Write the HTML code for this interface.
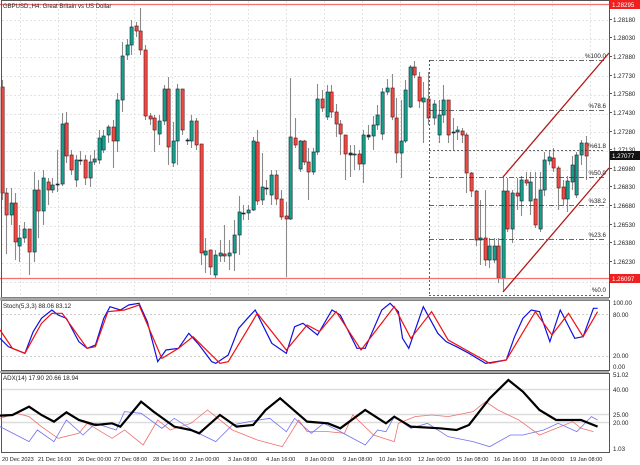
<!DOCTYPE html>
<html><head><meta charset="utf-8"><style>
html,body{margin:0;padding:0;background:#fff;width:640px;height:465px;overflow:hidden}
svg{display:block;font-family:"Liberation Sans",sans-serif}
text{font-size:6.2px;fill:#222}
.d text{font-size:5.6px}
polyline{vector-effect:non-scaling-stroke}
</style></head><body>
<svg id="s" width="640" height="465" viewBox="0 0 640 465">
<g id="grid" stroke="#e4e4e4" stroke-width="1" stroke-dasharray="2,2"></g>
<g id="c"></g>
<line x1="0" y1="4.5" x2="609" y2="4.5" stroke="#f27070" stroke-width="1.2"/>
<line x1="0" y1="278.5" x2="609" y2="278.5" stroke="#f27070" stroke-width="1.2"/>
<g stroke="#333" stroke-width="0.8" fill="none">
<line x1="429.5" y1="60" x2="429.5" y2="295" stroke-dasharray="2,2"/>
<line x1="429" y1="60.5" x2="605" y2="60.5" stroke-dasharray="5,2,1,2"/>
<line x1="429" y1="110.5" x2="605" y2="110.5" stroke-dasharray="5,2,1,2"/>
<line x1="429" y1="150.5" x2="605" y2="150.5" stroke-dasharray="2,2"/>
<line x1="429" y1="177.5" x2="605" y2="177.5" stroke-dasharray="5,2,1,2"/>
<line x1="429" y1="205.5" x2="605" y2="205.5" stroke-dasharray="5,2,1,2"/>
<line x1="429" y1="239.5" x2="605" y2="239.5" stroke-dasharray="5,2,1,2"/>
<line x1="429" y1="295.5" x2="605" y2="295.5" stroke-dasharray="2,2"/>
</g>
<g text-anchor="end">
<text x="606" y="58">%100.0</text><text x="606" y="108">%78.6</text><text x="606" y="148">%61.8</text>
<text x="606" y="175">%50.0</text><text x="606" y="203">%38.2</text><text x="606" y="237">%23.6</text><text x="606" y="292">%0.0</text>
</g>
<line x1="503" y1="177" x2="609" y2="53" stroke="#b01818" stroke-width="1.3"/>
<line x1="503" y1="292" x2="609" y2="168" stroke="#b01818" stroke-width="1.3"/>
<g fill="none" stroke="#555" stroke-width="1">
<rect x="1.5" y="0.5" width="608" height="297"/>
<rect x="1.5" y="300.5" width="608" height="70"/>
<rect x="1.5" y="373.5" width="608" height="79"/>
</g>
<rect x="0" y="297.5" width="609" height="3" fill="#aaa"/>
<rect x="0" y="371" width="609" height="2" fill="#aaa"/>
<text x="3" y="8" style="font-size:6px">GBPUSD.,H4: Great Britain vs US Dollar</text>
<g id="ax"></g>
<rect x="610" y="0" width="30" height="9" fill="#f02020"/><text x="612" y="7" style="fill:#fff">1.28295</text>
<rect x="610" y="151" width="30" height="9" fill="#111"/><text x="612" y="158" style="fill:#fff">1.27077</text>
<rect x="610" y="274" width="30" height="9" fill="#f02020"/><text x="612" y="281" style="fill:#fff">1.26097</text>
<line x1="2" y1="314.5" x2="609" y2="314.5" stroke="#ccc" stroke-dasharray="2,2"/>
<line x1="2" y1="356.5" x2="609" y2="356.5" stroke="#ccc" stroke-dasharray="2,2"/>
<text x="3" y="308">Stoch(5,3,3) 88.06 83.12</text>
<g transform="translate(0,295) scale(0.415,0.3333)" fill="none">
<polyline stroke="#1010e0" stroke-width="1.2" points="0,130 20,155 60,175 80,110 100,70 125,45 140,60 160,70 190,140 210,160 230,150 250,70 265,35 290,45 310,30 335,25 355,80 380,200 400,165 430,160 455,115 480,150 510,200 520,205 550,180 575,100 600,65 615,45 655,145 690,175 710,95 730,85 765,120 800,45 820,60 860,160 880,160 920,45 940,25 960,50 970,130 985,160 1020,35 1055,115 1075,140 1100,155 1130,175 1170,205 1220,195 1240,125 1260,70 1280,45 1300,50 1325,140 1350,45 1385,130 1405,125 1430,40 1440,40"/>
<polyline stroke="#f01010" stroke-width="1.2" points="0,105 30,160 60,175 100,85 125,55 150,55 210,160 230,155 260,50 300,45 335,30 390,190 430,160 465,125 530,205 550,200 620,55 690,165 740,90 770,110 810,50 870,165 950,35 990,130 1040,50 1080,135 1130,170 1180,205 1220,195 1290,50 1330,120 1370,55 1405,125 1440,50"/>
</g>
<line x1="2" y1="389.5" x2="609" y2="389.5" stroke="#ddd" stroke-width="1.5"/>
<line x1="2" y1="414.5" x2="609" y2="414.5" stroke="#ddd" stroke-width="1.5"/>
<line x1="2" y1="422.5" x2="609" y2="422.5" stroke="#ddd" stroke-width="1.5"/>
<text x="3" y="380">ADX(14) 17.90 20.66 18.94</text>
<g transform="translate(0,295) scale(0.415,0.3333)" fill="none">
<polyline stroke="#f07070" stroke-width="0.8" points="0,370 40,355 70,365 100,395 140,430 190,415 210,385 270,430 300,405 345,450 380,375 410,405 460,385 500,345 560,405 620,435 680,455 720,375 740,410 790,410 830,415 850,360 900,420 950,440 960,385 1000,365 1040,360 1080,365 1140,350 1170,320 1200,345 1250,375 1300,420 1340,400 1380,380 1400,400 1430,410"/>
<polyline stroke="#7070f0" stroke-width="0.8" points="0,395 70,440 90,405 130,440 160,375 200,420 230,385 280,405 300,350 340,355 390,400 420,370 470,410 520,440 560,390 600,380 650,370 690,410 710,370 750,415 780,385 820,410 880,450 910,405 930,410 950,365 990,400 1030,385 1080,425 1140,440 1180,455 1230,420 1260,420 1310,405 1345,385 1390,410 1425,365 1440,375"/>
<polyline stroke="#000" stroke-width="2.2" points="0,362 30,360 70,335 100,360 130,380 160,352 190,375 230,390 270,385 290,395 340,320 370,350 420,395 460,405 480,415 530,360 570,395 610,390 640,345 675,310 740,380 790,385 820,400 880,345 930,385 950,365 990,395 1060,400 1100,405 1130,390 1180,310 1225,255 1260,290 1300,345 1340,375 1400,375 1440,395"/>
</g>
<g>
<text x="613" y="305">100.00</text><text x="613" y="317">80.00</text><text x="613" y="358">20.00</text><text x="613" y="369">0.00</text>
<text x="613" y="377">51.02</text><text x="613" y="392">40.00</text><text x="613" y="417">25.00</text><text x="613" y="425">20.00</text><text x="613" y="451">1.03</text>
</g>
<g class="d">
<text x="2" y="461">20 Dec 2023</text><text x="38" y="461">21 Dec 16:00</text><text x="78" y="461">26 Dec 00:00</text><text x="114" y="461">27 Dec 08:00</text>
<text x="153" y="461">28 Dec 16:00</text><text x="190" y="461">2 Jan 00:00</text><text x="228" y="461">3 Jan 08:00</text><text x="266" y="461">4 Jan 16:00</text>
<text x="305" y="461">8 Jan 00:00</text><text x="343" y="461">9 Jan 08:00</text><text x="379" y="461">10 Jan 16:00</text><text x="418" y="461">12 Jan 00:00</text>
<text x="456" y="461">15 Jan 08:00</text><text x="494" y="461">16 Jan 16:00</text><text x="532" y="461">18 Jan 00:00</text><text x="570" y="461">19 Jan 08:00</text>
</g>
</svg>
<script>
var NS="http://www.w3.org/2000/svg";
function el(p,t,a){var e=document.createElementNS(NS,t);for(var k in a)e.setAttribute(k,a[k]);p.appendChild(e);return e;}
var g=document.getElementById('grid');
for(var x=20;x<609;x+=38)el(g,'line',{x1:x+.5,y1:1,x2:x+.5,y2:297});
for(var y=20;y<297;y+=18.7)el(g,'line',{x1:2,y1:Math.round(y)+.5,x2:609,y2:Math.round(y)+.5});
var ax=document.getElementById('ax');
var L=[["1.28180",22],["1.28030",40],["1.27880",59],["1.27730",78],["1.27580",96],["1.27430",115],["1.27280",134],["1.27130",152],["1.26980",171],["1.26830",189],["1.26680",208],["1.26530",227],["1.26380",245],["1.26230",264]];
L.forEach(function(a){var t=el(ax,'text',{x:613,y:a[1]});t.textContent=a[0];el(ax,'line',{x1:609,y1:a[1]-2.5,x2:612,y2:a[1]-2.5,stroke:'#555'});});
var D=[[2,87,193,80,200,0],[6,193,215,188,254,0],[11,203,215,188,225,1],[15,203,242,193,260,0],[19,238,246,225,262,1],[24,229,238,222,243,1],[29,229,252,229,275,0],[34,190,252,172,262,1],[38,190,211,180,238,0],[43,178,211,170,225,1],[48,182,190,178,205,0],[52,185,190,178,193,1],[57,184,185,150,192,2],[62,124,184,113,186,1],[66,123,156,112,163,0],[71,155,170,150,175,0],[76,160,180,155,187,1],[80,160,161,151,165,2],[85,160,178,155,185,0],[90,162,178,155,187,1],[94,159,162,150,165,1],[99,138,160,130,164,1],[103,136,150,130,153,1],[108,127,135,125,143,1],[113,127,141,120,168,0],[117,100,141,93,152,1],[122,56,100,42,112,1],[127,45,55,39,60,1],[131,27,45,20,55,1],[136,26,31,22,37,0],[140,31,50,8,55,0],[145,50,116,45,120,0],[150,116,119,113,125,0],[154,118,130,115,152,0],[159,121,134,115,145,1],[164,89,121,85,125,1],[168,89,147,77,165,0],[173,141,163,122,167,1],[177,89,141,84,165,1],[182,89,130,89,135,0],[187,140,141,138,145,2],[191,121,141,115,148,1],[196,121,145,118,150,0],[201,144,253,144,265,0],[205,251,255,238,273,1],[210,250,267,250,275,0],[215,255,275,250,278,1],[220,253,256,240,262,1],[224,254,256,225,262,0],[229,253,256,240,270,1],[234,235,253,220,271,1],[239,212,235,196,255,1],[243,213,214,205,220,2],[248,210,213,205,220,1],[253,141,210,137,211,1],[257,142,201,130,205,0],[262,187,200,153,205,1],[266,188,189,180,195,2],[271,175,195,170,205,1],[276,175,199,170,205,0],[281,199,217,190,220,0],[286,216,219,202,277,0],[290,137,219,78,220,1],[295,138,145,118,148,0],[300,141,169,140,172,1],[304,141,162,140,165,0],[308,162,172,148,200,0],[313,152,172,148,175,1],[317,99,152,84,155,1],[322,99,108,90,112,0],[327,92,117,85,120,1],[331,92,112,85,118,0],[336,112,124,104,137,0],[340,124,134,120,155,0],[345,135,154,135,180,0],[350,153,155,145,177,2],[354,154,155,145,170,1],[359,154,164,150,170,0],[363,135,164,130,183,1],[368,135,137,125,140,2],[373,125,136,116,150,1],[377,115,125,105,130,1],[382,92,134,88,140,1],[387,88,92,79,95,1],[392,88,117,74,120,0],[396,118,153,98,163,0],[401,141,153,100,178,1],[405,90,141,80,143,1],[410,67,107,65,108,1],[414,67,75,61,78,0],[419,77,101,72,108,0],[423,98,102,82,143,1],[428,99,118,72,125,0],[434,104,118,100,125,1],[439,115,135,100,143,1],[443,100,115,85,123,1],[448,100,135,100,143,0],[453,132,133,118,150,2],[457,130,132,126,140,1],[462,131,135,128,143,0],[466,135,173,133,193,0],[471,173,191,172,197,0],[476,191,240,190,246,0],[480,238,240,200,265,1],[485,238,260,190,266,0],[489,246,260,238,268,1],[494,246,260,238,263,1],[498,246,278,238,283,0],[503,191,278,178,292,1],[507,191,229,178,232,0],[512,193,229,190,243,1],[517,193,196,178,210,0],[521,180,201,176,216,1],[526,180,183,172,186,0],[530,182,201,172,215,1],[535,199,225,172,228,0],[540,190,229,172,232,1],[544,160,190,152,196,1],[549,157,161,150,165,1],[553,158,168,148,172,0],[558,168,188,166,210,0],[563,187,199,180,205,0],[567,181,199,176,212,1],[572,165,182,156,190,1],[576,155,195,152,198,1],[581,143,155,140,165,1],[586,143,156,136,180,0]];
var c=document.getElementById('c');
D.forEach(function(d){var x=d[0];
el(c,'line',{x1:x+.5,y1:d[3],x2:x+.5,y2:d[4],stroke:'#8a8a8a','stroke-width':1.1});
var h=Math.max(1,d[2]-d[1]);
el(c,'rect',{x:x-1,y:d[1],width:3.2,height:h,fill:d[5]==1?'#17a08a':(d[5]==0?'#ee4a44':'#333'),stroke:d[5]==0?'#5a1010':'#123',"stroke-width":0.6});
});
</script>
</body></html>
